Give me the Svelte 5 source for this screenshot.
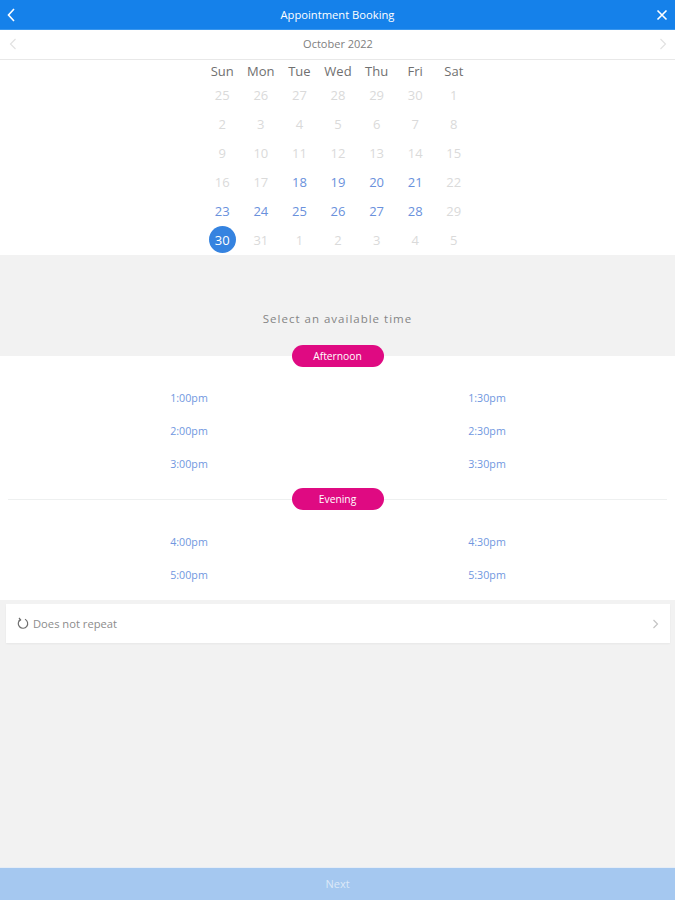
<script lang="ts">
    const weekdays = ['Sun', 'Mon', 'Tue', 'Wed', 'Thu', 'Fri', 'Sat'];

    const days = [
        25, 26, 27, 28, 29, 30, 1,
        2, 3, 4, 5, 6, 7, 8,
        9, 10, 11, 12, 13, 14, 15,
        16, 17, 18, 19, 20, 21, 22,
        23, 24, 25, 26, 27, 28, 29,
        30, 31, 1, 2, 3, 4, 5
    ];

    // indexes into days, the rest of the month is not bookable
    const firstOpen = 23;
    const lastOpen = 33;
    const selected = 35;

    const groups = [
        { name: 'Afternoon', slots: ['1:00pm', '1:30pm', '2:00pm', '2:30pm', '3:00pm', '3:30pm'] },
        { name: 'Evening', slots: ['4:00pm', '4:30pm', '5:00pm', '5:30pm'] }
    ];

    const dayClass = (index: number) => {
        if (index === selected) return 'day selected';
        if (index >= firstOpen && index <= lastOpen && index !== 27) return 'day open';
        return 'day';
    };
</script>

<div class="page">
    <header class="topbar">
        <svg class="top-icon back" width="10" height="16" viewBox="0 0 10 16" aria-hidden="true">
            <path d="M8 2 L2.5 8 L8 14" />
        </svg>
        <span class="title">Appointment Booking</span>
        <svg class="top-icon" width="12" height="12" viewBox="0 0 12 12" aria-hidden="true">
            <path d="M1.5 1.5 L10.5 10.5 M10.5 1.5 L1.5 10.5" />
        </svg>
    </header>

    <div class="month-bar">
        <svg class="month-icon" width="8" height="12" viewBox="0 0 8 12" aria-hidden="true">
            <path d="M6.5 1 L1.5 6 L6.5 11" />
        </svg>
        <span class="month-label">October 2022</span>
        <svg class="month-icon" width="8" height="12" viewBox="0 0 8 12" aria-hidden="true">
            <path d="M1.5 1 L6.5 6 L1.5 11" />
        </svg>
    </div>

    <section class="calendar">
        <div class="week-head">
            {#each weekdays as weekday}
                <span>{weekday}</span>
            {/each}
        </div>
        <div class="days">
            {#each days as day, index}
                <span class={dayClass(index)}><span>{day}</span></span>
            {/each}
        </div>
    </section>

    <div class="prompt">Select an available time</div>

    <section class="times">
        {#each groups as group, groupIndex}
            <div class="group" class:later={groupIndex > 0}>
                <div class="pill-row">
                    <span class="pill">{group.name}</span>
                </div>
                <div class="slots">
                    {#each group.slots as slot}
                        <span class="slot">{slot}</span>
                    {/each}
                </div>
            </div>
        {/each}
    </section>

    <div class="repeat">
        <svg width="12" height="13" viewBox="0 0 12 13" aria-hidden="true">
            <path d="M3.4 2.6 A4.7 4.7 0 1 0 8 2.3" />
            <path d="M2 1 L3.6 2.8 L1.8 4.2" />
        </svg>
        <span class="repeat-label">Does not repeat</span>
        <svg class="repeat-arrow" width="7" height="10" viewBox="0 0 7 10" aria-hidden="true">
            <path d="M1.5 1 L5.5 5 L1.5 9" />
        </svg>
    </div>

    <div class="spacer"></div>

    <footer class="next">Next</footer>
</div>

<style>
    :global(body) {
        margin: 0;
    }

    .page {
        display: flex;
        flex-direction: column;
        height: 900px;
        overflow: hidden;
        font-family: 'Open Sans', sans-serif;
        background: #f2f2f2;
    }

    .topbar {
        display: flex;
        align-items: center;
        justify-content: space-between;
        box-sizing: border-box;
        height: 30px;
        padding: 0 7px 0 6px;
        background: #1581ea;
        border-bottom: 1px solid #3a97ee;
    }

    .top-icon path {
        fill: none;
        stroke: #fff;
        stroke-width: 1.6;
    }

    .top-icon.back {
        margin-right: 3px;
    }

    .title {
        color: #fff;
        font-size: 11.2px;
        font-weight: 500;
    }

    .month-bar {
        display: flex;
        align-items: center;
        justify-content: space-between;
        box-sizing: border-box;
        height: 30px;
        padding: 0 8px 2px 9px;
        color: #808080;
        font-size: 11px;
        background: #fff;
        border-bottom: 1px solid #e8e8e8;
    }

    .month-icon path {
        fill: none;
        stroke: #e2e2e2;
        stroke-width: 1.2;
    }

    .calendar {
        box-sizing: border-box;
        height: 195px;
        padding-left: 1px;
        background: #fff;
    }

    .week-head,
    .days {
        display: grid;
        grid-template-columns: repeat(7, 38.6px);
        justify-content: center;
        justify-items: center;
    }

    .week-head {
        align-items: center;
        box-sizing: border-box;
        height: 20px;
        padding-top: 1px;
        color: #707070;
        font-size: 13px;
    }

    .days {
        grid-auto-rows: 29px;
        color: #dadada;
        font-size: 13px;
    }

    .day {
        display: flex;
        align-items: center;
        justify-content: center;
    }

    .day.open {
        color: #6a91dc;
    }

    .day.selected span {
        display: flex;
        align-items: center;
        justify-content: center;
        width: 27px;
        height: 27px;
        border-radius: 50%;
        color: #fff;
        background: #3583e0;
    }

    .prompt {
        box-sizing: border-box;
        height: 101px;
        padding-top: 56px;
        color: #858585;
        font-size: 11.5px;
        letter-spacing: 1px;
        text-align: center;
    }

    .times {
        box-sizing: border-box;
        height: 244px;
        background: #fff;
    }

    .group {
        position: relative;
    }

    .group.later {
        margin: 0 8px;
        border-top: 1px solid #eef0f0;
    }

    .pill-row {
        display: flex;
        justify-content: center;
        height: 11px;
    }

    .pill {
        position: absolute;
        top: -11px;
        box-sizing: border-box;
        width: 92px;
        height: 22px;
        border-radius: 11px;
        color: #fff;
        font-size: 10.3px;
        font-weight: 500;
        line-height: 22px;
        text-align: center;
        background: #df0a82;
    }

    .group.later .pill {
        top: -12px;
    }

    .slots {
        display: grid;
        grid-template-columns: 298px 298px;
        grid-auto-rows: 33px;
        justify-content: center;
        justify-items: center;
        align-items: center;
        padding-top: 14px;
        padding-left: 1px;
        color: #7097e0;
        font-size: 10.7px;
    }

    .group:not(.later) .slots {
        padding-bottom: 19px;
    }

    .repeat {
        display: flex;
        align-items: center;
        gap: 4px;
        box-sizing: border-box;
        height: 39px;
        margin: 4px 5px 0 6px;
        padding: 0 11px;
        color: #8c8c8c;
        font-size: 11.2px;
        background: #fff;
        box-shadow: 0 1px 2px rgba(0, 0, 0, 0.05);
    }

    .repeat svg path {
        fill: none;
        stroke: #6e6e6e;
        stroke-width: 1.2;
    }

    .repeat .repeat-arrow {
        margin-left: auto;
    }

    .repeat .repeat-arrow path {
        stroke: #c4c4c4;
    }

    .spacer {
        flex: 1;
    }

    .next {
        box-sizing: border-box;
        height: 33px;
        padding-top: 6px;
        color: #dce8f8;
        font-size: 11px;
        font-weight: 500;
        line-height: 20px;
        text-align: center;
        background: #a5c8f0;
        border-top: 1px solid #e6edf6;
    }
</style>
